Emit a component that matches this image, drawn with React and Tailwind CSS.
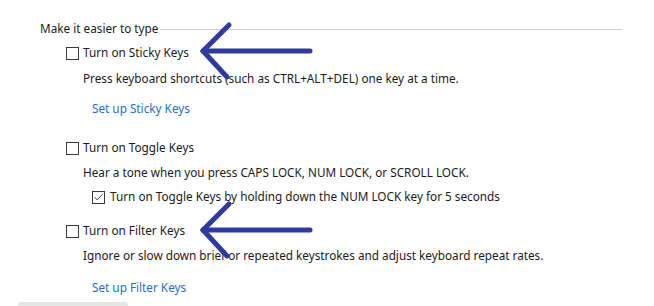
import { Check } from 'lucide-react';

const Box = ({ checked }) => (
  <span className="w-[13px] h-[13px] border border-[#3a3a3a] bg-white flex items-center justify-center shrink-0">
    {checked && <Check size={11} strokeWidth={2} className="text-[#222]" />}
  </span>
);

const Arrow = ({ top }) => (
  <svg
    className="absolute left-[196px]"
    style={{ top }}
    width="122"
    height="64"
    viewBox="0 0 122 64"
  >
    <g stroke="#2e3a9e" strokeWidth="5" strokeLinecap="round" fill="none">
      <line x1="7" y1="32" x2="114" y2="32" />
      <line x1="7" y1="32" x2="33" y2="6" />
      <line x1="7" y1="32" x2="31" y2="58" />
    </g>
  </svg>
);

const App = () => {
  return (
    <div className="relative w-[654px] h-[306px] bg-white overflow-hidden text-[11.75px] text-[#1b1b1b] font-['Noto_Sans',sans-serif]">
      <div className="pl-[40px] pt-[21px] flex flex-col">
        <div className="h-[16px] flex items-center gap-[2px] pr-[32px]">
          <span className="leading-none">Make it easier to type</span>
          <div className="flex-1 h-px bg-[#cfcfcf]" />
        </div>

        <div className="mt-[8px] h-[16px] pl-[26px] flex items-center gap-[4px]">
          <Box />
          <span>Turn on Sticky Keys</span>
        </div>
        <div className="mt-[10px] h-[16px] pl-[43px] flex items-center">
          Press keyboard shortcuts (such as CTRL+ALT+DEL) one key at a time.
        </div>
        <div className="mt-[14px] h-[16px] pl-[52px] flex items-center text-[#1f6fc5]">
          Set up Sticky Keys
        </div>

        <div className="mt-[23px] h-[16px] pl-[26px] flex items-center gap-[4px]">
          <Box />
          <span>Turn on Toggle Keys</span>
        </div>
        <div className="mt-[9px] h-[16px] pl-[43px] flex items-center">
          Hear a tone when you press CAPS LOCK, NUM LOCK, or SCROLL LOCK.
        </div>
        <div className="mt-[8px] h-[16px] pl-[52px] flex items-center gap-[5px]">
          <Box checked />
          <span>Turn on Toggle Keys by holding down the NUM LOCK key for 5 seconds</span>
        </div>

        <div className="mt-[18px] h-[16px] pl-[26px] flex items-center gap-[4px]">
          <Box />
          <span>Turn on Filter Keys</span>
        </div>
        <div className="mt-[9px] h-[16px] pl-[43px] flex items-center">
          Ignore or slow down brief or repeated keystrokes and adjust keyboard repeat rates.
        </div>
        <div className="mt-[16px] h-[16px] pl-[52px] flex items-center text-[#1f6fc5]">
          Set up Filter Keys
        </div>
      </div>

      <div className="absolute left-[18px] top-[302px] w-[110px] h-[6px] rounded-t-[3px] bg-[#e6e6e6]" />

      <Arrow top={19} />
      <Arrow top={198} />
    </div>
  );
};

export default App;
